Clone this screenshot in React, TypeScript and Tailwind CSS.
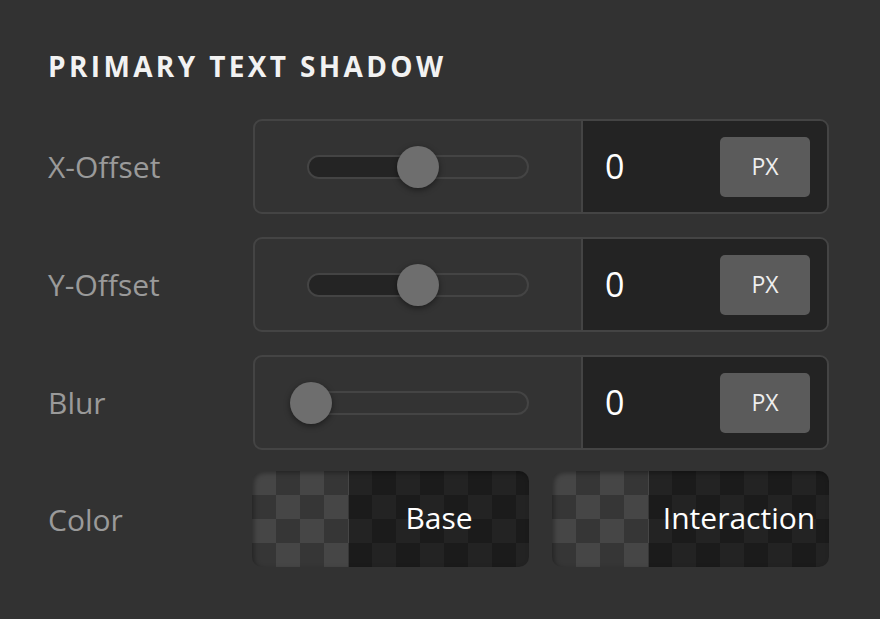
import React from "react";

type SliderRow = {
  label: string;
  pct: number;
  value: string;
};

const rows: SliderRow[] = [
  { label: "X-Offset", pct: 50, value: "0" },
  { label: "Y-Offset", pct: 50, value: "0" },
  { label: "Blur", pct: 1, value: "0" },
];

function Slider({ pct }: { pct: number }) {
  return (
    <div className="relative h-[24px] w-[222px] rounded-full border-2 border-[#444444]">
      <div
        className="h-full rounded-l-full bg-[#242424]"
        style={{ width: `${pct}%` }}
      />
      {/* knob sits on top of the track */}
      <div
        className="absolute top-1/2 h-[42px] w-[42px] -translate-y-1/2 rounded-full bg-[#6e6e6e] shadow-[0_2px_6px_rgba(0,0,0,0.45)]"
        style={{ left: `calc(${pct}% - 21px)` }}
      />
    </div>
  );
}

function Row({ row }: { row: SliderRow }) {
  return (
    <div className="flex items-center">
      <div className="w-[205px] text-[30px] text-[#9a9a9a]">{row.label}</div>
      <div className="flex h-[95px] w-[576px] overflow-hidden rounded-[9px] border-2 border-[#444444] bg-[#333333]">
        <div className="flex w-[328px] items-center justify-center border-r-2 border-[#444444]">
          <Slider pct={row.pct} />
        </div>
        <div className="flex flex-1 items-center justify-between bg-[#232323] pl-[22px] pr-[17px]">
          <span className="text-[34px] text-white">{row.value}</span>
          <button className="flex h-[60px] w-[90px] items-center justify-center rounded-[5px] bg-[#5b5b5b] text-[23px] text-[#eeeeee]">
            PX
          </button>
        </div>
      </div>
    </div>
  );
}

function Swatch({ label }: { label: string }) {
  return (
    <div className="flex h-[96px] w-[277px] overflow-hidden rounded-[10px] [background-image:repeating-conic-gradient(#363636_0_25%,#464646_0_50%)] [background-size:48px_48px] shadow-[inset_2px_2px_5px_rgba(0,0,0,0.35)]">
      <div className="w-[97px]" />
      <div className="flex flex-1 items-center justify-center bg-black/50 pb-[4px] text-[30px] text-white">
        {label}
      </div>
    </div>
  );
}

export default function App() {
  return (
    <div className="h-[619px] w-full bg-[#323232] font-['Open_Sans',sans-serif]">
      <div className="pl-[48px] pt-[52px]">
        <h1 className="text-[28px] font-bold leading-[28px] tracking-[0.12em] text-[#f2f2f2]">
          PRIMARY TEXT SHADOW
        </h1>
        <div className="mt-[39px] flex flex-col gap-[23px]">
          {rows.map((r) => (
            <Row key={r.label} row={r} />
          ))}
          <div className="-mt-[2px] flex items-center">
            <div className="w-[204px] text-[30px] text-[#9a9a9a]">Color</div>
            <div className="flex gap-[23px]">
              <Swatch label="Base" />
              <Swatch label="Interaction" />
            </div>
          </div>
        </div>
      </div>
    </div>
  );
}
